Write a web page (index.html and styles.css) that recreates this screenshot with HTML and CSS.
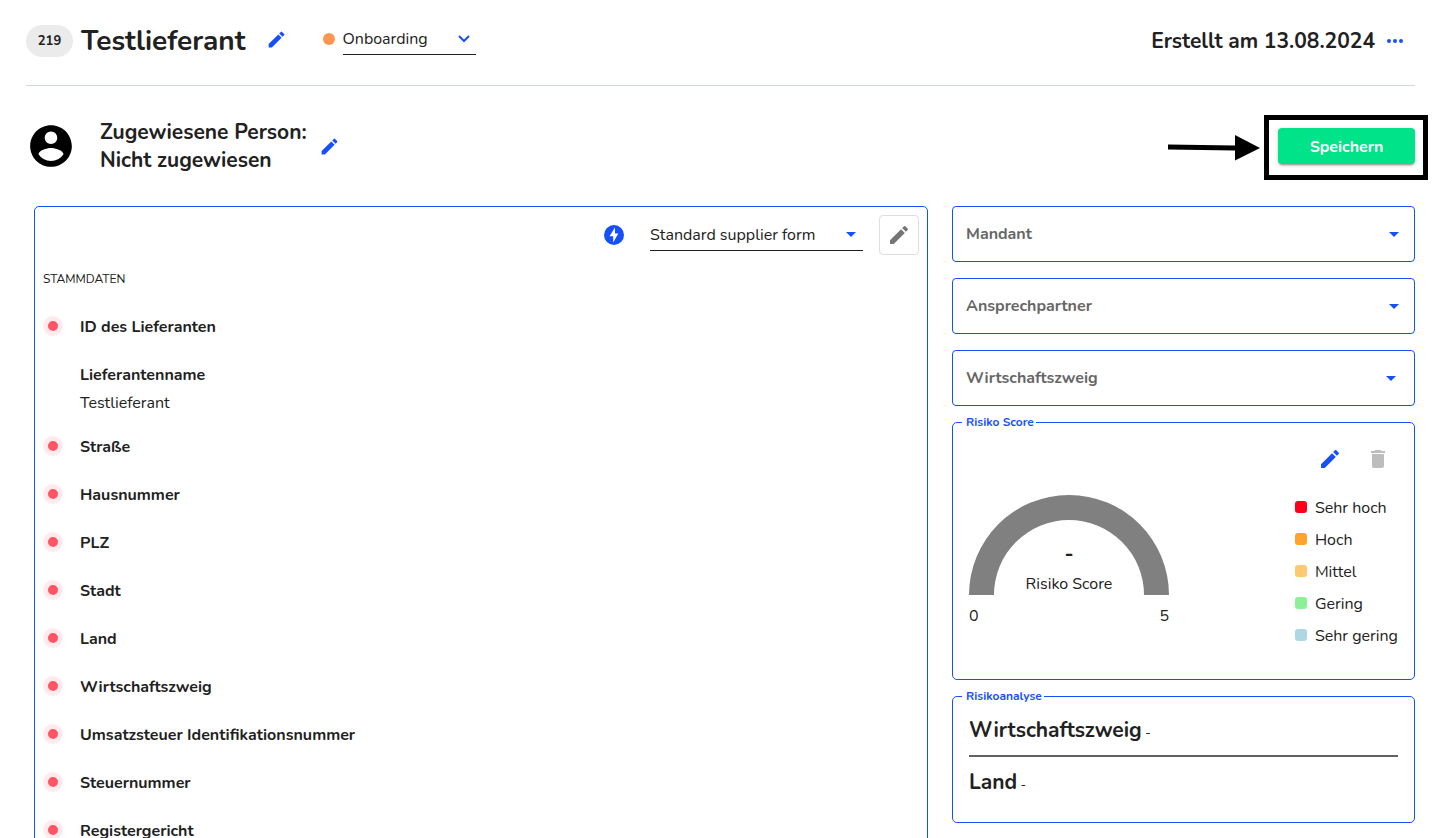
FILE: index.html
```html
<!DOCTYPE html>
<html lang="de">
<head>
<meta charset="utf-8">
<meta name="viewport" content="width=device-width, initial-scale=1">
<title>Testlieferant</title>
<link rel="stylesheet" href="styles.css">
</head>
<body>
<svg class="sprite" aria-hidden="true">
  <symbol id="pencil" viewBox="0 0 24 24"><path d="M3 17.25V21h3.75L17.81 9.94l-3.75-3.75L3 17.25zM20.71 7.04a1 1 0 0 0 0-1.41l-2.34-2.34a1 1 0 0 0-1.41 0l-1.83 1.83 3.75 3.75 1.83-1.83z"/></symbol>
  <symbol id="caret" viewBox="0 0 10 5"><path d="M0 0h10L5 5z"/></symbol>
</svg>
<header class="topbar">
  <span class="badge">219</span>
  <h1 class="title">Testlieferant</h1>
  <button class="icon-button title-edit" aria-label="Namen bearbeiten"><svg class="icon-small"><use href="#pencil"/></svg></button>
  <span class="status-dot"></span>
  <div class="line-select status">
    <select aria-label="Status"><option>Onboarding</option></select>
    <svg class="chevron" viewBox="0 0 12 8"><path d="M1 1l5 5 5-5"/></svg>
  </div>
  <p class="created">Erstellt am 13.08.2024</p>
  <button class="icon-button more" aria-label="Mehr"><svg viewBox="0 0 16 4"><circle cx="2" cy="2" r="2"/><circle cx="8" cy="2" r="2"/><circle cx="14" cy="2" r="2"/></svg></button>
</header>

<section class="assignee">
  <svg class="avatar" viewBox="0 0 24 24"><path d="M12 2C6.48 2 2 6.48 2 12s4.48 10 10 10 10-4.48 10-10S17.52 2 12 2zm0 3c1.66 0 3 1.34 3 3s-1.34 3-3 3-3-1.34-3-3 1.34-3 3-3zm0 14.2a7.2 7.2 0 0 1-6-3.22c.03-1.99 4-3.08 6-3.08 1.99 0 5.97 1.09 6 3.08a7.2 7.2 0 0 1-6 3.22z"/></svg>
  <p class="assignee-name">Zugewiesene Person:<br>Nicht zugewiesen</p>
  <button class="icon-button" aria-label="Person bearbeiten"><svg class="icon-small"><use href="#pencil"/></svg></button>
  <div class="save">
    <button class="save-button">Speichern</button>
    <span class="save-frame"></span>
    <svg class="save-arrow" viewBox="0 0 94 26"><path d="M1 9.500L68 10.500V0L93 13 68 25.500V15.500L1 14.500z"/></svg>
  </div>
</section>

<main class="columns">
  <section class="panel">
    <div class="toolbar">
      <svg class="bolt" viewBox="0 0 20 20"><circle cx="10" cy="10" r="10"/><path d="M11 2.500L5.500 11.200H9.200V17.500L14.300 8.600H11z"/></svg>
      <div class="line-select form-select">
        <select aria-label="Formular"><option>Standard supplier form</option></select>
        <svg class="caret"><use href="#caret"/></svg>
      </div>
      <button class="edit-box" aria-label="Formular bearbeiten"><svg><use href="#pencil"/></svg></button>
    </div>
    <h2 class="section-title">STAMMDATEN</h2>
    <ul class="fields">
      <li><i class="dot"></i><b>ID des Lieferanten</b></li>
      <li class="filled"><b>Lieferantenname</b><span>Testlieferant</span></li>
      <li><i class="dot"></i><b>Straße</b></li>
      <li><i class="dot"></i><b>Hausnummer</b></li>
      <li><i class="dot"></i><b>PLZ</b></li>
      <li><i class="dot"></i><b>Stadt</b></li>
      <li><i class="dot"></i><b>Land</b></li>
      <li><i class="dot"></i><b>Wirtschaftszweig</b></li>
      <li><i class="dot"></i><b>Umsatzsteuer Identifikationsnummer</b></li>
      <li><i class="dot"></i><b>Steuernummer</b></li>
      <li><i class="dot"></i><b>Registergericht</b></li>
    </ul>
  </section>

  <aside class="side">
    <div class="box-select"><select aria-label="Mandant"><option>Mandant</option></select><svg class="caret"><use href="#caret"/></svg></div>
    <div class="box-select"><select aria-label="Ansprechpartner"><option>Ansprechpartner</option></select><svg class="caret"><use href="#caret"/></svg></div>
    <div class="box-select inset"><select aria-label="Wirtschaftszweig"><option>Wirtschaftszweig</option></select><svg class="caret"><use href="#caret"/></svg></div>

    <fieldset class="card score">
      <legend>Risiko Score</legend>
      <div class="score-actions">
        <button class="icon-button" aria-label="Score bearbeiten"><svg><use href="#pencil"/></svg></button>
        <button class="icon-button delete" aria-label="Score löschen" disabled><svg viewBox="0 0 24 24"><path d="M6 19c0 1.100.9 2 2 2h8c1.100 0 2-.9 2-2V7H6v12zM19 4h-3.500l-1-1h-5l-1 1H5v2h14V4z"/></svg></button>
      </div>
      <div class="score-body">
        <div class="gauge">
          <div class="gauge-dial">
            <svg viewBox="0 0 200 100"><path d="M0 100a100 100 0 0 1 200 0h-25a75 75 0 0 0-150 0z"/></svg>
            <div class="gauge-text"><strong>-</strong><span>Risiko Score</span></div>
          </div>
          <div class="gauge-scale"><span>0</span><span>5</span></div>
        </div>
        <ul class="legend">
          <li><i class="swatch very-high"></i>Sehr hoch</li>
          <li><i class="swatch high"></i>Hoch</li>
          <li><i class="swatch medium"></i>Mittel</li>
          <li><i class="swatch low"></i>Gering</li>
          <li><i class="swatch very-low"></i>Sehr gering</li>
        </ul>
      </div>
    </fieldset>

    <fieldset class="card analysis">
      <legend>Risikoanalyse</legend>
      <p><strong>Wirtschaftszweig</strong> -</p>
      <hr>
      <p><strong>Land</strong> -</p>
    </fieldset>
  </aside>
</main>
</body>
</html>
```
FILE: styles.css
```css
* { box-sizing: border-box; }

:root {
  --blue: #1750fb;
  --ink: #212121;
}

body {
  margin: 0;
  height: 100vh;
  overflow: hidden;
  padding: 0 21px 0 26px;
  background: #fff;
  color: var(--ink);
  font: 16px/24px Nunito, Lato, sans-serif;
}

h1, h2, p, ul { margin: 0; padding: 0; }
ul { list-style: none; }
svg { display: block; fill: currentColor; }
.sprite { position: absolute; width: 0; height: 0; }

button, select { font: inherit; color: inherit; }

select {
  appearance: none;
  width: 100%;
  border: 0;
  padding: 0;
  background: none;
  grid-area: 1 / 1;
}

.icon-button {
  padding: 0;
  border: 0;
  background: none;
  color: var(--blue);
}
.icon-button svg { width: 24px; height: 24px; }
.icon-button .icon-small { width: 21px; height: 21px; }

.topbar {
  display: flex;
  align-items: center;
  height: 86px;
  padding-bottom: 4px;
  border-bottom: 1px solid #cfd8dc;
}
.badge {
  width: 47px;
  border-radius: 16px;
  background: #ebebeb;
  font-size: 13px;
  font-weight: 700;
  line-height: 32px;
  text-align: center;
}
.title {
  margin-left: 8px;
  font-size: 28px;
  font-weight: 700;
  line-height: 36px;
}
.title-edit { margin: 0 0 2px 20px; }
.status-dot {
  width: 12px;
  height: 12px;
  margin: 0 8px 4px 36px;
  border-radius: 50%;
  background: #ff9650;
}

.line-select {
  display: grid;
  align-items: center;
  border-bottom: 1px solid var(--ink);
}
.line-select svg, .box-select svg {
  grid-area: 1 / 1;
  justify-self: end;
  color: var(--blue);
  pointer-events: none;
}
.status { width: 133px; height: 32px; margin-bottom: 4px; padding-top: 2px; }
.chevron {
  width: 12px;
  height: 8px;
  margin-right: 6px;
  fill: none;
  stroke: currentColor;
  stroke-width: 2;
}
.caret { width: 10px; height: 5px; }

.created {
  margin-left: auto;
  font-size: 21px;
  font-weight: 700;
  line-height: 28px;
}
.more { margin: 0 12px; }
.more svg { width: 16px; height: 4px; }

.assignee {
  display: flex;
  align-items: center;
  height: 120px;
}
.avatar { width: 50px; height: 50px; color: #000; }
.assignee-name {
  margin: 0 12px 0 24px;
  font-size: 21px;
  font-weight: 700;
  line-height: 28px;
}
.save { position: relative; margin-left: auto; }
.save-button {
  display: block;
  width: 137px;
  height: 36px;
  padding: 1px 0 0;
  border: 0;
  border-radius: 4px;
  background: #00e389;
  color: #fff;
  font-weight: 700;
  box-shadow: 0 3px 1px -2px rgba(0,0,0,.2), 0 2px 2px rgba(0,0,0,.14), 0 1px 5px rgba(0,0,0,.12);
}
.save-frame {
  position: absolute;
  inset: -13px -13px -16px -14px;
  border: 5px solid #000;
  pointer-events: none;
}
.save-arrow {
  position: absolute;
  top: 7px;
  right: 154px;
  width: 94px;
  height: 26px;
  color: #000;
}

.columns {
  display: grid;
  grid-template-columns: minmax(0, 894fr) minmax(0, 463fr);
  gap: 24px;
  align-items: start;
  padding-left: 8px;
}
.panel {
  padding: 8px;
  border: 1px solid var(--blue);
  border-radius: 5px;
}
.toolbar {
  display: flex;
  align-items: center;
  justify-content: flex-end;
}
.bolt { width: 20px; height: 20px; color: var(--blue); }
.bolt path { fill: #fff; }
.form-select { width: 213px; height: 32px; margin: 0 16px 0 26px; }
.form-select .caret { margin-right: 7px; }
.edit-box {
  display: grid;
  place-items: center;
  width: 40px;
  height: 40px;
  padding: 0;
  border: 1px solid #dedede;
  border-radius: 4px;
  background: #fff;
  color: #757575;
}
.edit-box svg { width: 24px; height: 24px; }
.section-title {
  margin: 12px 0 24px;
  font-size: 12px;
  font-weight: 400;
  line-height: 24px;
}
.fields { display: grid; gap: 24px; }
.fields li {
  display: grid;
  grid-template-columns: 20px 1fr;
  column-gap: 17px;
  align-items: center;
}
.fields b, .fields span { grid-column: 2; }
.fields .filled { row-gap: 4px; margin-bottom: -4px; }
.dot {
  width: 20px;
  height: 20px;
  margin-bottom: 2px;
  border: 5px solid #ffebee;
  border-radius: 50%;
  background: #ff5567;
}

.side { display: grid; gap: 16px; }
.box-select {
  display: grid;
  align-items: center;
  height: 56px;
  padding: 0 15px 0 13px;
  border: 1px solid var(--blue);
  border-radius: 4px;
  color: #666;
  font-weight: 700;
}
.box-select.inset { padding-right: 18px; }

.card {
  min-width: 0;
  margin: -8px 0 0;
  padding: 0 16px 20px;
  border: 1px solid var(--blue);
  border-radius: 5px;
}
.card legend {
  margin-left: -7px;
  padding-left: 4px;
  color: var(--blue);
  font-size: 12px;
  font-weight: 700;
  line-height: 16px;
}
.score-actions {
  display: flex;
  justify-content: flex-end;
  gap: 24px;
  padding: 17px 8px 0 0;
}
.icon-button.delete { color: #bdbdbd; }
.score-body {
  display: flex;
  justify-content: space-between;
  padding: 24px 0 11px;
}
.gauge { width: 200px; }
.gauge-dial { display: grid; }
.gauge-dial svg { grid-area: 1 / 1; width: 100%; color: #808080; }
.gauge-text {
  grid-area: 1 / 1;
  display: grid;
  align-content: end;
  justify-items: center;
  margin-bottom: -1px;
}
.gauge-text strong { font-size: 21px; line-height: 36px; }
.gauge-scale { display: flex; justify-content: space-between; padding-top: 9px; }
.legend { display: grid; gap: 8px; padding-top: 1px; }
.legend li { display: flex; align-items: center; gap: 8px; }
.swatch { width: 12px; height: 12px; margin-bottom: 2px; border-radius: 3px; }
.very-high { background: #ff0019; }
.high { background: #ffa32f; }
.medium { background: #ffc972; }
.low { background: #8cf096; }
.very-low { background: #add8e3; }

.analysis { padding-bottom: 23px; }
.analysis p { font-size: 13px; line-height: 28px; }
.analysis p:first-of-type { padding-top: 12px; }
.analysis strong { font-size: 21px; }
.analysis hr {
  height: 2px;
  margin: 8px 0 11px;
  border: 0;
  background: #616161;
}
```
